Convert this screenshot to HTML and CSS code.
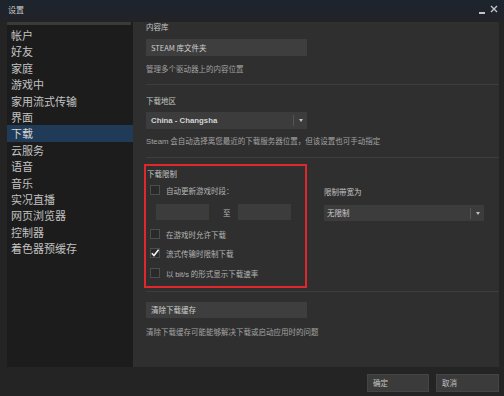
FILE: index.html
```html
<!DOCTYPE html>
<html lang="zh">
<head>
<meta charset="utf-8">
<title>设置</title>
<link rel="stylesheet" href="styles.css">
</head>
<body>
<div class="window">
  <div class="titlebar">
    <span class="title">设置</span>
    <div class="winctl">
      <span class="min"></span>
      <svg class="close" width="8" height="8" viewBox="0 0 8 8"><path d="M1 1L7 7M7 1L1 7" stroke="#c4c4c4" stroke-width="1.4"/></svg>
    </div>
  </div>
  <div class="main">
    <nav class="sidebar">
      <div class="sidebar-top"></div>
      <ul class="nav">
        <li>帐户</li>
        <li>好友</li>
        <li>家庭</li>
        <li>游戏中</li>
        <li>家用流式传输</li>
        <li>界面</li>
        <li class="active">下载</li>
        <li>云服务</li>
        <li>语音</li>
        <li>音乐</li>
        <li>实况直播</li>
        <li>网页浏览器</li>
        <li>控制器</li>
        <li>着色器预缓存</li>
      </ul>
    </nav>
    <section class="content">
      <div class="label">内容库</div>
      <div class="btn wide btn-lib">STEAM 库文件夹</div>
      <div class="desc d1">管理多个驱动器上的内容位置</div>
      <div class="sep s1"></div>
      <div class="label l2">下载地区</div>
      <div class="select wide sel-region"><span class="val latin">China - Changsha</span><span class="divider"></span><span class="arrow"></span></div>
      <div class="desc d2"><span class="latin">Steam</span> 会自动选择离您最近的下载服务器位置，但该设置也可手动指定</div>
      <div class="sep s2"></div>
      <div class="limits">
        <div class="redbox">
          <div class="label">下载限制</div>
          <div class="check-row r1"><span class="cb"></span><span>自动更新游戏时段：</span></div>
          <div class="time-row">
            <span class="input"></span>
            <span class="to">至</span>
            <span class="input"></span>
          </div>
          <div class="check-row r2"><span class="cb"></span><span>在游戏时允许下载</span></div>
          <div class="check-row r3"><span class="cb checked"><svg width="10" height="10" viewBox="0 0 10 10"><path d="M1.8 5.2L4 7.6L8.6 1.8" fill="none" stroke="#f2f2f2" stroke-width="1.6"/></svg></span><span>流式传输时限制下载</span></div>
          <div class="check-row r4"><span class="cb"></span><span>以 <span class="latin">bit/s</span> 的形式显示下载速率</span></div>
        </div>
        <div class="bandwidth">
          <div class="label">限制带宽为</div>
          <div class="select sel-bw"><span class="val">无限制</span><span class="divider"></span><span class="arrow"></span></div>
        </div>
      </div>
      <div class="sep s3"></div>
      <div class="btn wide btn-clear">清除下载缓存</div>
      <div class="desc d3">清除下载缓存可能能够解决下载或启动应用时的问题</div>
    </section>
  </div>
  <div class="footer">
    <div class="fbtn">确定</div>
    <div class="fbtn f2">取消</div>
  </div>
</div>
</body>
</html>
```

FILE: styles.css
```css
* { box-sizing: border-box; margin: 0; padding: 0; }
html, body { width: 504px; height: 396px; overflow: hidden; }
body {
  background: #242424;
  font-family: "Noto Sans CJK SC", "Liberation Sans", sans-serif;
  color: #b4b4b4;
}
.latin { font-family: "Liberation Sans", "Noto Sans CJK SC", sans-serif; }
.window { width: 504px; height: 396px; display: flex; flex-direction: column; }

.titlebar {
  height: 22px;
  flex: none;
  display: flex;
  align-items: center;
  justify-content: space-between;
  padding: 0 6px 2px 8px;
  background: linear-gradient(#1c242d, #20232a 60%, #222326);
}
.title { font-size: 8px; line-height: 10px; color: #c8c8c8; }
.winctl { display: flex; align-items: center; gap: 5px; }
.min { width: 6px; height: 1.5px; background: #c4c4c4; margin-top: 6px; }
.close { margin-top: -3px; }

.main {
  height: 345px;
  flex: none;
  display: flex;
  padding: 0 5px 0 7px;
}
.sidebar { width: 126px; flex: none; background: #1c1c1c; }
.sidebar-top { height: 3px; background: #3a3a3a; margin-right: 2px; }
.nav { list-style: none; padding-top: 2px; }
.nav li {
  height: 16.4px;
  line-height: 16.4px;
  font-size: 11px;
  padding-left: 4px;
  color: #c2c2c2;
}
.nav li.active { background: #1f3b58; color: #d4d4d4; }

.content {
  flex: 1;
  background: #2f2f2f;
  padding-left: 13px;
  display: flex;
  flex-direction: column;
}
.label { font-size: 7.5px; line-height: 10px; height: 10px; color: #c6c6c6; }
.desc { font-size: 7.5px; line-height: 10px; height: 10px; color: #a2a2a2; white-space: nowrap; }
.desc .latin { font-size: 7.8px; }
.sep { height: 1px; background: #3d3d3d; }
.wide { width: 161px; }
.btn {
  height: 17px;
  background: #3e3e3e;
  font-size: 7.5px;
  line-height: 17px;
  padding-left: 5px;
  color: #d0d0d0;
}
.btn-lib { margin-top: 7px; }
.d1 { margin-top: 8px; }
.s1 { margin-top: 10px; }
.l2 { margin-top: 11px; }
.select {
  height: 17px;
  background: #3c3c3c;
  display: flex;
  align-items: center;
  position: relative;
  padding-left: 5px;
  color: #d4d4d4;
}
.select .val { flex: 1; font-size: 8px; line-height: 17px; }
.select .divider { width: 1px; height: 11px; background: #555; margin-right: 5px; }
.select .arrow {
  width: 0; height: 0;
  border-left: 2.5px solid transparent;
  border-right: 2.5px solid transparent;
  border-top: 3px solid #c0c0c0;
  margin-right: 4px;
}
.sel-region { margin-top: 6px; }
.sel-region .val { font-weight: bold; font-size: 7.8px; }
.d2 { margin-top: 7px; }
.s2 { margin-top: 11px; }

.limits { display: flex; margin-top: 6px; margin-left: -2px; }
.redbox {
  width: 163px;
  height: 124px;
  border: 2px solid #e0282c;
  padding: 3px 0 0 1px;
  display: flex;
  flex-direction: column;
}
.check-row {
  display: flex;
  align-items: center;
  height: 10px;
  padding-left: 3px;
  font-size: 7.5px;
  color: #b4b4b4;
  gap: 6px;
}
.cb {
  width: 10px;
  height: 10px;
  flex: none;
  border: 1px solid #4c4c4c;
  background: #2a2a2a;
  display: flex;
  align-items: center;
  justify-content: center;
}
.cb.checked { border-color: #4c4c4c; }
.cb svg { margin: -1px; }
.r1 { margin-top: 6px; }
.time-row {
  display: flex;
  align-items: center;
  margin-top: 9px;
  padding-left: 9px;
  height: 16px;
}
.input { width: 53px; height: 16px; background: #3c3c3c; }
.to { font-size: 7.5px; color: #b8b8b8; margin: 0 7px 0 14px; }
.r2 { margin-top: 9px; }
.r3 { margin-top: 9px; }
.r4 { margin-top: 10px; }

.bandwidth { margin-left: 17px; padding-top: 23px; }
.sel-bw { width: 160px; margin-top: 8px; padding-left: 3px; height: 16px; }
.sel-bw .val { font-size: 7.5px; line-height: 16px; color: #cfcfcf; }

.s3 { margin-top: 3px; }
.btn-clear { margin-top: 10px; height: 16px; line-height: 16px; }
.d3 { margin-top: 9px; }

.footer {
  flex: 1;
  display: flex;
  justify-content: flex-end;
  align-items: flex-start;
  padding: 7px 5px 0 0;
  gap: 7px;
}
.fbtn {
  width: 62px;
  height: 18px;
  background: #3b3b3b;
  border: 1px solid #444;
  font-size: 7.5px;
  line-height: 16px;
  padding-left: 5px;
  color: #c4c4c4;
}
.f2 { width: 63px; }
```
